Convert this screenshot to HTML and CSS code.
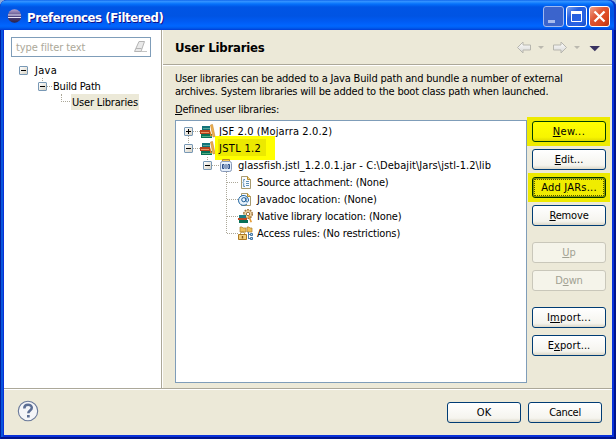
FILE: index.html
```html
<!DOCTYPE html>
<html lang="en">
<head>
<meta charset="utf-8">
<title>Preferences (Filtered)</title>
<link rel="stylesheet" href="styles.css">
</head>
<body>
<svg width="0" height="0" class="defs" aria-hidden="true">
<defs>
<linearGradient id="ball" x2="0" y2="1"><stop stop-color="#b8a5cf"/><stop offset=".5" stop-color="#514785"/><stop offset="1" stop-color="#292047"/></linearGradient>
<linearGradient id="grey" x2="0" y2="1"><stop stop-color="#fff"/><stop offset="1" stop-color="#d5d5d2"/></linearGradient>
<symbol id="books" viewBox="0 0 16 16">
<path d="M2 2h8v4H2z" fill="#13737a"/><path d="M3 4h7v1H3z" fill="#58a89b"/>
<path d="M0 6h10v4H0z" fill="#b6421b"/><path d="M1 8h8v1H1z" fill="#ed9364"/>
<path d="M1 10h11v4H1z" fill="#087057"/><path d="M2 12h10v1H2z" fill="#53ad82"/>
<path d="M10.500 1l2-.5 2.500 12-2 .5z" fill="#f2b34d" stroke="#c58530" stroke-width=".6"/><path d="M10 6l2 6h-2z" fill="#d88425"/>
</symbol>
<symbol id="page" viewBox="0 0 16 16"><path d="M3.500 1.500h6l3 3v9h-9z" fill="#f6faff" stroke="#a89b70"/><path d="M9.500 1.500v3h3" fill="#f2d891" stroke="#b88c2c"/></symbol>
</defs>
</svg>
<div class="window">
<header class="titlebar">
<svg class="logo" width="15" height="15" viewBox="0 0 15 15"><circle cx="7.500" cy="7" r="6.800" fill="url(#ball)"/><path d="M1 6h13M1 8.500h13" stroke="#e6e2f5" stroke-width="1"/></svg>
<h1><span class="t-title">Preferences (Filtered)</span></h1>
<div class="controls">
<span class="ctl min"><svg width="19" height="19"><path d="M4 13h7v3H4z" fill="#a8bbee"/></svg></span>
<span class="ctl max"><svg width="19" height="19"><path d="M4.500 5.500h10v9h-10z" fill="none" stroke="#fff"/><path d="M4 4h11v3H4z" fill="#fff"/></svg></span>
<span class="ctl close"><svg width="19" height="19"><path d="M4.500 4.500l10 10M14.500 4.500l-10 10" stroke="#fff" stroke-width="2.300"/></svg></span>
</div>
</header>
<main>
<aside>
<div class="filter"><span class="t-filter">type filter text</span><svg width="16" height="16" viewBox="0 0 16 16"><path d="M1.500 12.500L6 2.500h5.500L8 12.500z" fill="#e9e9e9" stroke="#b4b4b4"/><path d="M3 9.500h5.500" stroke="#b4b4b4"/><path d="M8 12.500h6" fill="none" stroke="#c4c4c4"/></svg></div>
<div class="nav">
<svg class="guides" width="60" height="48"><path d="M42.500 10v3" class="dots"/></svg>
<div class="node n1"><i class="exp"></i><span class="t-java">Java</span></div>
<div class="node n2"><i class="exp"></i><b class="dash"></b><span class="t-build">Build Path</span></div>
<div class="node n3"><b class="corner"></b><span class="current"><span class="t-ul">User Libraries</span></span></div>
</div>
</aside>
<section class="pane">
<div class="head"><h2><span class="t-head">User Libraries</span></h2>
<svg width="88" height="16" viewBox="515 40 88 16"><g fill="url(#grey)" stroke="#b7b6ae"><path d="M517.500 47.500l5.500-5.500v3h7.500v5H523v3z"/><path d="M566.500 47.500l-5.500-5.500v3h-7.500v5h7.500v3z"/></g><path d="M538 46h6l-3 3zM574 46h6l-3 3z" fill="#bbb9af"/><path d="M589.500 46h10.500l-5.200 5.200z" fill="#383260"/></svg></div>
<div class="body">
<p class="desc"><span class="t-d1">User libraries can be added to a Java Build path and bundle a number of external</span><br><span class="t-d2">archives. System libraries will be added to the boot class path when launched.</span></p>
<p class="label"><span class="t-def"><u>D</u>efined user libraries:</span></p>
<div class="split">
<div class="tree">
<svg class="guides" width="80" height="124"><path d="M12.500 15v8M31.500 36v4M50.500 51v62" class="dots"/></svg>
<div class="row r1"><i class="exp plus"></i><b class="dash"></b><svg class="ico" width="16" height="16"><use href="#books"/></svg><span class="t-jsf">JSF 2.0 (Mojarra 2.0.2)</span></div>
<div class="row r1"><i class="exp"></i><b class="dash"></b><svg class="ico" width="16" height="16"><use href="#books"/></svg><span class="mark"></span><span class="t-jstl">JSTL 1.2</span></div>
<div class="row r2"><i class="exp"></i><b class="dash"></b><svg class="ico" width="16" height="16" viewBox="0 0 16 16"><path d="M3.500 1.500h7v2h-7z" fill="#f5c458" stroke="#b78829"/><rect x="1.500" y="3.500" width="11" height="10" rx="2" fill="#e7f0fb" stroke="#8799b8"/><path d="M3.500 6.500h1.500v4H3.500zM7 6v5M9 6.500h1.500v4H9z" fill="none" stroke="#294d88"/></svg><span class="t-glass">glassfish.jstl_1.2.0.1.jar - C:\Debajit\Jars\jstl-1.2\lib</span></div>
<div class="row r3"><b class="dash"></b><svg class="ico" width="16" height="16" viewBox="0 0 16 16"><use href="#page"/><path d="M7 4.500H5.700v2L5 7.500l.7 1v3H7M8 6.500h3M8 8.500h3M8 10.500h3" fill="none" stroke="#4d82ae" stroke-width=".9"/></svg><span class="t-src">Source attachment: (None)</span></div>
<div class="row r3"><b class="dash"></b><svg class="ico" width="16" height="16" viewBox="0 0 16 16"><use href="#page"/><path d="M9 12A5 5 0 1 1 10.500 8c0 2.600-2.500 2.600-2.500.6V5.500" fill="#e7f2fc" stroke="#2568a2"/><circle cx="5.800" cy="7.700" r="2.100" fill="none" stroke="#185994"/></svg><span class="t-doc">Javadoc location: (None)</span></div>
<div class="row r3"><b class="dash"></b><svg class="ico" width="16" height="16" viewBox="0 0 16 16"><circle cx="10" cy="5" r="4.300" fill="#eed4a4" stroke="#9c7440" stroke-width="1.500" stroke-dasharray="1.700 1"/><circle cx="10" cy="5" r="1.700" fill="#fff" stroke="#9c7440"/><path d="M1 6h7v3H1z" fill="#197e85"/><path d="M0 9h9v2H0z" fill="#bb4822"/><path d="M1 11h9v3H1z" fill="#087057"/><path d="M10 7l1.500-.5L14 13l-1.500.5z" fill="#e49a34"/></svg><span class="t-nat">Native library location: (None)</span></div>
<div class="row r3"><b class="dash"></b><svg class="ico" width="16" height="16" viewBox="0 0 16 16"><path d="M2 1h2l1 1h3v4H2zM9 1h2l1 1h2v4H9z" fill="#efc15b" stroke="#ad802c" stroke-width=".7"/><path d="M2.500 9V7.500c0-2 4-2 4 0V9" fill="none" stroke="#b48a35"/><path d="M.5 8.500h8v5h-8z" fill="#f3cf7c" stroke="#ae7a22"/><path d="M4.500 10v2.500" stroke="#805419" stroke-width="1.400"/><path d="M10.500 6v7M10 8.500h2M10 12.500h2" stroke="#527eaa"/><path d="M12.500 7.500h2v2h-2zM12.500 11.500h2v2h-2z" fill="#b9d7f0" stroke="#477aa8"/></svg><span class="t-acc">Access rules: (No restrictions)</span></div>
</div>
<div class="buttons">
<div class="hi"><button><span class="t-new"><u>N</u>ew...</span></button></div>
<button><span class="t-edit"><u>E</u>dit...</span></button>
<div class="hi focus"><button><span class="t-add">Add <u>J</u>ARs...</span></button></div>
<button><span class="t-rem"><u>R</u>emove</span></button>
<button class="gap" disabled><span class="t-up"><u>U</u>p</span></button>
<button disabled><span class="t-down">D<u>o</u>wn</span></button>
<button class="gap"><span class="t-imp">I<u>m</u>port...</span></button>
<button><span class="t-exp">E<u>x</u>port...</span></button>
</div>
</div>
</div>
</section>
</main>
<footer>
<svg width="22" height="22" viewBox="0 0 22 22"><circle cx="11" cy="11" r="9.700" fill="#f4f5f8" stroke="#687899" stroke-width="1.100"/><path d="M7.300 8.500c0-5 7.500-4.500 7.500-.7 0 2.700-3.500 2.700-3.500 5.500" fill="none" stroke="#5b6e94" stroke-width="2.500"/><path d="M10 15h2.700v2.500H10z" fill="#5b6e94"/></svg>
<div class="actions"><button><span class="t-ok">OK</span></button><button><span class="t-can">Cancel</span></button></div>
</footer>
</div>
</body>
</html>
```
FILE: styles.css
```css
* { box-sizing: border-box; }
body { margin: 0; background: #8ba9dc; font: 11px/13px "DejaVu Sans Condensed", "DejaVu Sans", sans-serif; color: #000; overflow: hidden; }
h1, h2, p { margin: 0; font: inherit; }
span { white-space: nowrap; }
u { text-decoration-thickness: 1px; text-underline-offset: 1px; }
.defs { position: absolute; }
.window { width: 616px; height: 439px; display: flex; flex-direction: column; padding: 0 4px 4px; border-radius: 7px 7px 0 0; background: #0831d9; box-shadow: inset 1px 0 #001ea0, inset -2px -2px #00138c, inset 3px 0 #0855dd; }
.titlebar { height: 30px; margin: 0 -4px; padding: 0 6px 0 7px; flex: none; display: flex; align-items: center; border-radius: 7px 7px 0 0; background: linear-gradient(#0058e6 0, #3a93ff 1px, #288eff 2px, #0571fb 4px, #0055e5 7px, #0054e3 16px, #005cf5 22px, #0066ff 26px, #005bed 28px, #003dd7 30px); box-shadow: inset -2px 0 #0831c0; }
.titlebar h1 { margin: 5px auto 0 5px; font-weight: bold; font-size: 13px; line-height: 16px; color: #fff; text-shadow: 1px 1px #0f1089; }
.logo { margin-top: 2px; }
.controls { display: flex; gap: 2px; margin-top: 3px; }
.ctl { width: 21px; height: 21px; border: 1px solid #fff; border-radius: 3px; background: linear-gradient(135deg, #7ba1f0, #265edc 35%, #2863e5 75%, #174bc0); }
.ctl svg { display: block; }
.min { border-color: #a0b9f0; background: #3b64cc; }
.close { background: linear-gradient(135deg, #f0a18b, #df5634 40%, #dc4821 70%, #b93311); }
main { height: 359px; display: flex; border-bottom: 1px solid #aca899; box-shadow: 0 1px #fff; position: relative; z-index: 1; }
aside { width: 158px; flex: none; background: #fff; border-right: 1px solid #aca899; padding: 7px 0 0 7px; }
.filter { width: 140px; height: 20px; border: 1px solid #7f9db9; display: flex; align-items: center; justify-content: space-between; padding: 0 1px 0 4px; color: #aca899; }
.nav { position: relative; margin-top: 5px; }
.guides { position: absolute; left: 0; top: 0; overflow: visible; }
.nav .guides { left: -11px; }
.nav .guides { left: -11px; top: 6px; }
.dots { stroke: #aca899; stroke-dasharray: 1 1; fill: none; }
.node, .row { display: flex; align-items: center; position: relative; }
.node { height: 16px; }
.n1 { padding-left: 8px; }
.n1 .exp { margin-right: 7px; }
.n2 { padding-left: 27px; }
.n2 .dash { width: 5px; margin-right: 1px; }
.n3 { padding-left: 50px; }
.corner { width: 9px; height: 8px; margin: -8px 1px 0 0; border: dotted #aca899; border-width: 0 0 1px 1px; }
.current { background: #ece9d8; width: 68px; height: 16px; padding: 2px 0 0 1px; }
.exp { width: 9px; height: 9px; flex: none; border: 1px solid #7898b5; border-radius: 1px; background: linear-gradient(#000, #000) 1px 3px / 5px 1px no-repeat, linear-gradient(135deg, #fff, #d8d3c5); }
.plus { background: linear-gradient(#000, #000) 1px 3px / 5px 1px no-repeat, linear-gradient(#000, #000) 3px 1px / 1px 5px no-repeat, linear-gradient(135deg, #fff, #d8d3c5); }
.dash { height: 1px; background: repeating-linear-gradient(90deg, #aca899 0 1px, transparent 1px 2px); }
.pane { flex: 1; margin-left: 1px; background: #ece9d8; box-shadow: -1px 0 #fff; }
.head { height: 35px; border-bottom: 1px solid #aca899; box-shadow: 0 1px #fff; display: flex; justify-content: space-between; align-items: center; padding: 1px 9px 0 12px; }
h2 { font-size: 13px; font-weight: bold; line-height: 16px; padding-top: 1px; }
.body { padding: 7px 2px 0 12px; }
.label { margin-top: 5px; }
.split { display: flex; margin-top: 4px; }
.tree { width: 352px; height: 263px; flex: none; border: 1px solid #7f9db9; background: #fff; padding-top: 2px; position: relative; }
.row { height: 17px; }
.row .dash { width: 7px; }
.ico { flex: none; margin-right: 3px; }
.r1 { padding-left: 8px; }
.r2 { padding-left: 27px; }
.r3 { padding-left: 51px; }
.r3 .dash { width: 11px; }
.mark { position: absolute; left: 39px; top: -4px; width: 60px; height: 24px; background: #ff0; }
.mark::after { content: ""; position: absolute; left: 3px; top: 3px; width: 48px; height: 17px; background: #ece900; }
.mark + span { position: relative; }
.buttons { width: 83px; display: flex; flex-direction: column; align-items: flex-start; gap: 7px; padding-top: 1px; }
button { width: 74px; height: 21px; flex: none; margin: 0 0 0 5px; padding: 0; border: 1px solid #003c74; border-radius: 3px; background: linear-gradient(#fff, #f5f4ee 80%, #dcd8c8); font: inherit; color: #000; text-align: center; }
button:disabled { color: #a1a192; background: #f5f4ea; border-color: #c9c7ba; }
.gap { margin-top: 9px; }
.hi { width: 83px; height: 29px; margin: -4px 0; padding: 4px 0; background: #eeea00; }
.hi button { display: block; background: linear-gradient(#ff0, #f7f500 80%, #dfda00); border-color: #004000; }
.focus { width: 82px; margin-left: 1px; }
.focus button { margin-left: 4px; background: #f0ec00; border-color: #003000; box-shadow: inset 0 0 0 1px #8c9a00; outline: 1px dotted #555500; outline-offset: -3px; }
footer { flex: 1; background: #ece9d8; display: flex; align-items: flex-start; justify-content: space-between; padding: 11px 10px 0 13px; }
.actions { display: flex; gap: 2px; padding-top: 2px; }

/* Tracking per label */
.t-title { letter-spacing: -.41px; }
.t-filter { letter-spacing: -.1px; }
.t-java { letter-spacing: .3px; }
.t-build { letter-spacing: -.2px; }
.t-ul { letter-spacing: -.18px; }
.t-head { letter-spacing: -.2px; }
.t-d1 { letter-spacing: -.187px; }
.t-d2 { letter-spacing: -.21px; }
.t-def { letter-spacing: -.25px; }
.t-jsf { letter-spacing: .12px; }
.t-jstl { letter-spacing: .3px; }
.t-glass { letter-spacing: .07px; }
.t-src { letter-spacing: -.12px; }
.t-doc { letter-spacing: -.05px; }
.t-nat { letter-spacing: -.16px; }
.t-acc { letter-spacing: -.14px; }
.t-new { letter-spacing: .4px; }
.t-add { letter-spacing: .2px; }
.t-rem, .t-down { letter-spacing: -.15px; }
.t-imp { letter-spacing: .2px; }
.t-exp { letter-spacing: .1px; }
.t-can { letter-spacing: -.3px; }
```
